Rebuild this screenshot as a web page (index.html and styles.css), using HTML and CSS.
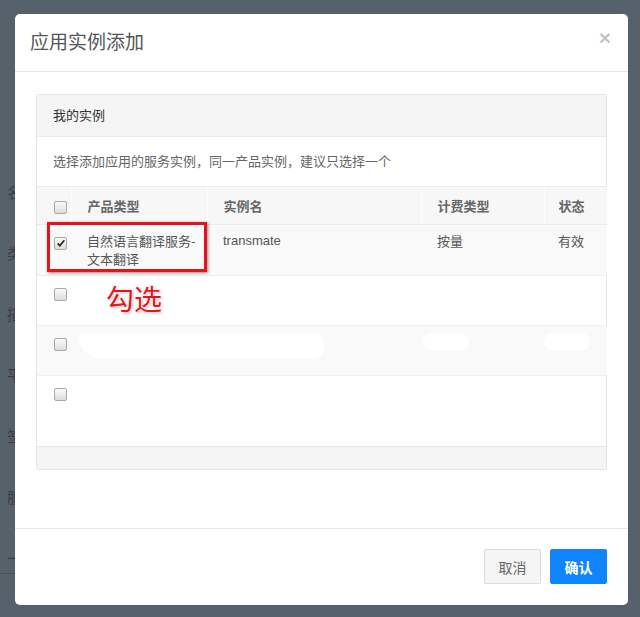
FILE: index.html
```html
<!DOCTYPE html>
<html lang="zh-CN">
<head>
    <meta charset="UTF-8">
    <meta name="viewport" content="width=device-width, initial-scale=1.0">
    <title>应用实例添加</title>
    <link rel="stylesheet" href="styles.css">
</head>
<body>

<div class="screen">
    <!-- page behind the dialog, only its edge shows -->
    <div class="behind">
        <div class="behind-label">名</div>
        <div class="behind-label">类</div>
        <div class="behind-label">描</div>
        <div class="behind-label">平</div>
        <div class="behind-label">签</div>
        <div class="behind-label">服</div>
        <div class="behind-label behind-last">一</div>
        <div class="behind-line"></div>
    </div>

    <div class="modal">
        <div class="modal-header">
            <h4 class="modal-title">应用实例添加</h4>
            <span class="close">&times;</span>
        </div>

        <div class="modal-body">
            <div class="panel">
                <div class="panel-heading">我的实例</div>
                <div class="panel-tip">选择添加应用的服务实例，同一产品实例，建议只选择一个</div>

                <table class="table">
                    <thead>
                        <tr>
                            <th class="col-check"><span class="checkbox"></span></th>
                            <th class="col-type">产品类型</th>
                            <th class="col-name">实例名</th>
                            <th class="col-bill">计费类型</th>
                            <th class="col-state">状态</th>
                        </tr>
                    </thead>
                    <tbody>
                        <tr class="row-odd">
                            <td class="col-check"><span class="checkbox checked">
                                <svg viewBox="0 0 12 12" width="10" height="10"><path d="M2 6.5 L4.6 9.2 L10 2.8" fill="none" stroke="#222" stroke-width="2"/></svg>
                            </span></td>
                            <td>自然语言翻译服务-<br>文本翻译</td>
                            <td class="latin">transmate</td>
                            <td>按量</td>
                            <td class="col-state">有效</td>
                        </tr>
                        <tr>
                            <td class="col-check"><span class="checkbox"></span></td>
                            <td></td>
                            <td></td>
                            <td></td>
                            <td class="col-state"></td>
                        </tr>
                        <tr class="row-odd">
                            <td class="col-check"><span class="checkbox"></span></td>
                            <td colspan="2"><span class="smudge smudge-wide"></span></td>
                            <td><span class="smudge smudge-small"></span></td>
                            <td class="col-state"><span class="smudge smudge-small"></span></td>
                        </tr>
                        <tr class="row-tall">
                            <td class="col-check"><span class="checkbox"></span></td>
                            <td></td>
                            <td></td>
                            <td></td>
                            <td class="col-state"></td>
                        </tr>
                    </tbody>
                </table>
                <div class="panel-footer"></div>

                <div class="mark-box"></div>
                <div class="mark-text">勾选</div>
            </div>
        </div>

        <div class="modal-footer">
            <button class="btn btn-default">取消</button>
            <button class="btn btn-primary">确认</button>
        </div>
    </div>
</div>

</body>
</html>
```

FILE: styles.css
```css
body {
    margin: 0;
    padding: 0;
    background-color: #57616c;
    font-family: "Liberation Sans", "Noto Sans CJK SC", sans-serif;
    font-size: 13px;
    color: #555;
}

.screen {
    display: flex;
    height: 617px;
    overflow: hidden;
}

.behind {
    width: 15px;
    flex-shrink: 0;
    overflow: hidden;
    padding-top: 183px;
    box-sizing: border-box;
}

.behind-label {
    height: 61px;
    margin-right: -7px;
    text-align: right;
    font-size: 15px;
    line-height: 20px;
    color: #363d45;
    white-space: nowrap;
}

.behind-last {
    height: 24px;
}

.behind-line {
    height: 1px;
    background-color: #48505a;
}

.modal {
    width: 613px;
    margin-top: 14px;
    height: 591px;
    background-color: #fff;
    border-radius: 5px;
    display: flex;
    flex-direction: column;
}

.modal-header {
    height: 57px;
    border-bottom: 1px solid #e5e5e5;
    display: flex;
    align-items: center;
    justify-content: space-between;
    padding: 0 17px 0 15px;
}

.modal-title {
    margin: 0;
    font-family: "Noto Sans CJK SC", sans-serif;
    font-size: 19px;
    font-weight: normal;
    color: #555;
    line-height: 24px;
    margin-top: -4px;
}

.close {
    font-family: "Liberation Sans", sans-serif;
    font-size: 21px;
    font-weight: bold;
    color: #c4c4c4;
    margin-top: -10px;
}

.modal-body {
    flex: 1;
    padding: 22px 21px 0 21px;
}

.panel {
    position: relative;
    border: 1px solid #e4e4e4;
    border-radius: 2px;
    background-color: #fff;
}

.panel-heading {
    height: 41px;
    line-height: 40px;
    padding-left: 16px;
    background-color: #f5f5f5;
    border-bottom: 1px solid #ebebeb;
    color: #333;
    font-family: "Noto Sans CJK SC", sans-serif;
}

.panel-tip {
    height: 49px;
    line-height: 48px;
    padding-left: 16px;
    color: #666;
    font-family: "Noto Sans CJK SC", sans-serif;
    border-bottom: 1px solid #ebebeb;
}

.table {
    width: 100%;
    border-collapse: collapse;
    table-layout: fixed;
    font-family: "Noto Sans CJK SC", sans-serif;
}

.table th,
.table td {
    box-sizing: border-box;
}

.table th {
    height: 37px;
    text-align: left;
    font-weight: bold;
    color: #666;
    background-color: #f7f7f7;
    padding: 0 8px 0 16px;
    border-left: 1px solid #fdfdfd;
    border-bottom: 1px solid #ebebeb;
}

.table th.col-check {
    border-left: none;
}

.table td {
    height: 50px;
    vertical-align: top;
    padding: 7px 8px 7px 16px;
    line-height: 18px;
    color: #555;
    border-bottom: 1px solid #efefef;
}

.table td.latin {
    font-family: "Liberation Sans", sans-serif;
    font-size: 13px;
}

.table tr.row-odd td {
    background-color: #f9f9f9;
}

.table tr.row-tall td {
    height: 71px;
}

.table tbody tr:last-child td {
    border-bottom: 1px solid #e8e8e8;
}

.col-check {
    width: 34px;
}

.table .col-check {
    padding: 0 0 0 17px;
}

.table td.col-check {
    padding-top: 12px;
}

.table td.col-check .checkbox {
    display: block;
}

.col-type {
    width: 136px;
}

.col-name {
    width: 214px;
}

.col-bill {
    width: 123px;
}

.col-state {
    width: 63px;
}

.table .col-state {
    padding-left: 14px;
}

.checkbox {
    display: inline-block;
    width: 11px;
    height: 11px;
    border: 1px solid #a9a9a9;
    border-radius: 2px;
    background: linear-gradient(#fafafa, #dcdcdc);
    vertical-align: middle;
    position: relative;
}

.checkbox svg {
    position: absolute;
    left: 1px;
    top: 0;
}

.smudge {
    display: inline-block;
    background-color: #fff;
    border-radius: 12px;
}

.smudge-wide {
    width: 245px;
    height: 26px;
    margin-left: -8px;
    border-radius: 4px 14px 14px 30px;
}

.smudge-small {
    width: 46px;
    height: 18px;
    margin-left: -14px;
}

.panel-footer {
    height: 22px;
    background-color: #f5f5f5;
}

.mark-box {
    position: absolute;
    left: 10px;
    top: 127px;
    width: 154px;
    height: 44px;
    border: 3px solid #e4141c;
    box-shadow: 1px 1px 3px rgba(0, 0, 0, 0.45);
}

.mark-text {
    position: absolute;
    left: 69px;
    top: 185px;
    font-family: "Noto Sans CJK SC", sans-serif;
    font-size: 28px;
    line-height: 36px;
    color: #e8141c;
    text-shadow: 0 0 2px #fff, 0 0 2px #fff, 1px 1px 3px rgba(0, 0, 0, 0.35);
}

.modal-footer {
    border-top: 1px solid #e8e8e8;
    padding: 20px 21px 21px 0;
    display: flex;
    justify-content: flex-end;
    gap: 9px;
}

.btn {
    width: 57px;
    height: 35px;
    font-family: "Noto Sans CJK SC", sans-serif;
    font-size: 14px;
    border-radius: 2px;
    padding: 0;
    cursor: pointer;
}

.btn-default {
    background-color: #f5f5f5;
    border: 1px solid #dcdcdc;
    color: #666;
}

.btn-primary {
    background-color: #0f84fb;
    border: 1px solid #0f84fb;
    color: #fff;
    font-weight: bold;
}
```
